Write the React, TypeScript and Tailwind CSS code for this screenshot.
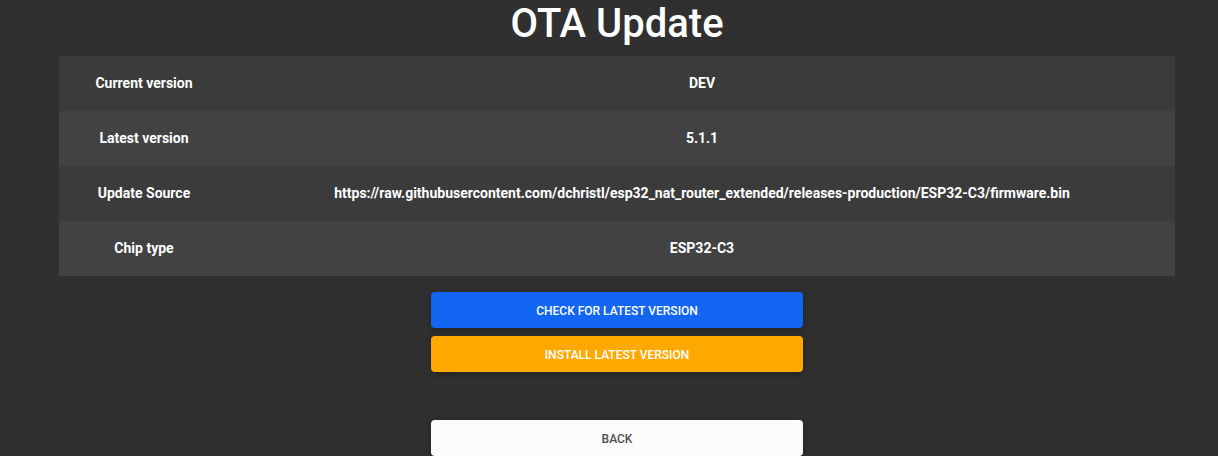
const rows = [
  { label: "Current version", value: "DEV" },
  { label: "Latest version", value: "5.1.1" },
  {
    label: "Update Source",
    value:
      "https://raw.githubusercontent.com/dchristl/esp32_nat_router_extended/releases-production/ESP32-C3/firmware.bin",
  },
  { label: "Chip type", value: "ESP32-C3" },
];

const cell = "border-b border-transparent py-4 font-bold";

const buttonBase =
  "w-full rounded pt-[10px] pb-2 text-xs leading-[18px] font-medium uppercase shadow-[0_2px_5px_0_rgba(0,0,0,0.2),0_2px_10px_0_rgba(0,0,0,0.1)]";

export default function App() {
  return (
    <div className="min-h-screen bg-[#303030] font-[Roboto,sans-serif] text-white">
      <main className="ml-[59px] mr-[43px] flex flex-col">
        <h1 className="pb-2 text-center text-[40px] font-medium leading-12">OTA Update</h1>
        <table className="w-full border-separate border-spacing-0 text-center text-sm leading-[22px]">
          <tbody>
            {rows.map((row) => (
              <tr key={row.label} className="odd:bg-[#3b3b3b] even:bg-[#424242]">
                <th scope="row" className={`${cell} w-[170px]`}>
                  {row.label}
                </th>
                <td className={cell}>{row.value}</td>
              </tr>
            ))}
          </tbody>
        </table>
        <div className="mx-auto mt-4 flex w-1/3 flex-col">
          <button type="button" className={`${buttonBase} bg-[#1266f1] text-white`}>
            Check for latest version
          </button>
          <button type="button" className={`${buttonBase} mt-2 bg-[#ffa900] text-white`}>
            Install latest version
          </button>
          <button type="button" className={`${buttonBase} mt-12 bg-[#fbfbfb] text-[#4f4f4f]`}>
            Back
          </button>
        </div>
      </main>
    </div>
  );
}
